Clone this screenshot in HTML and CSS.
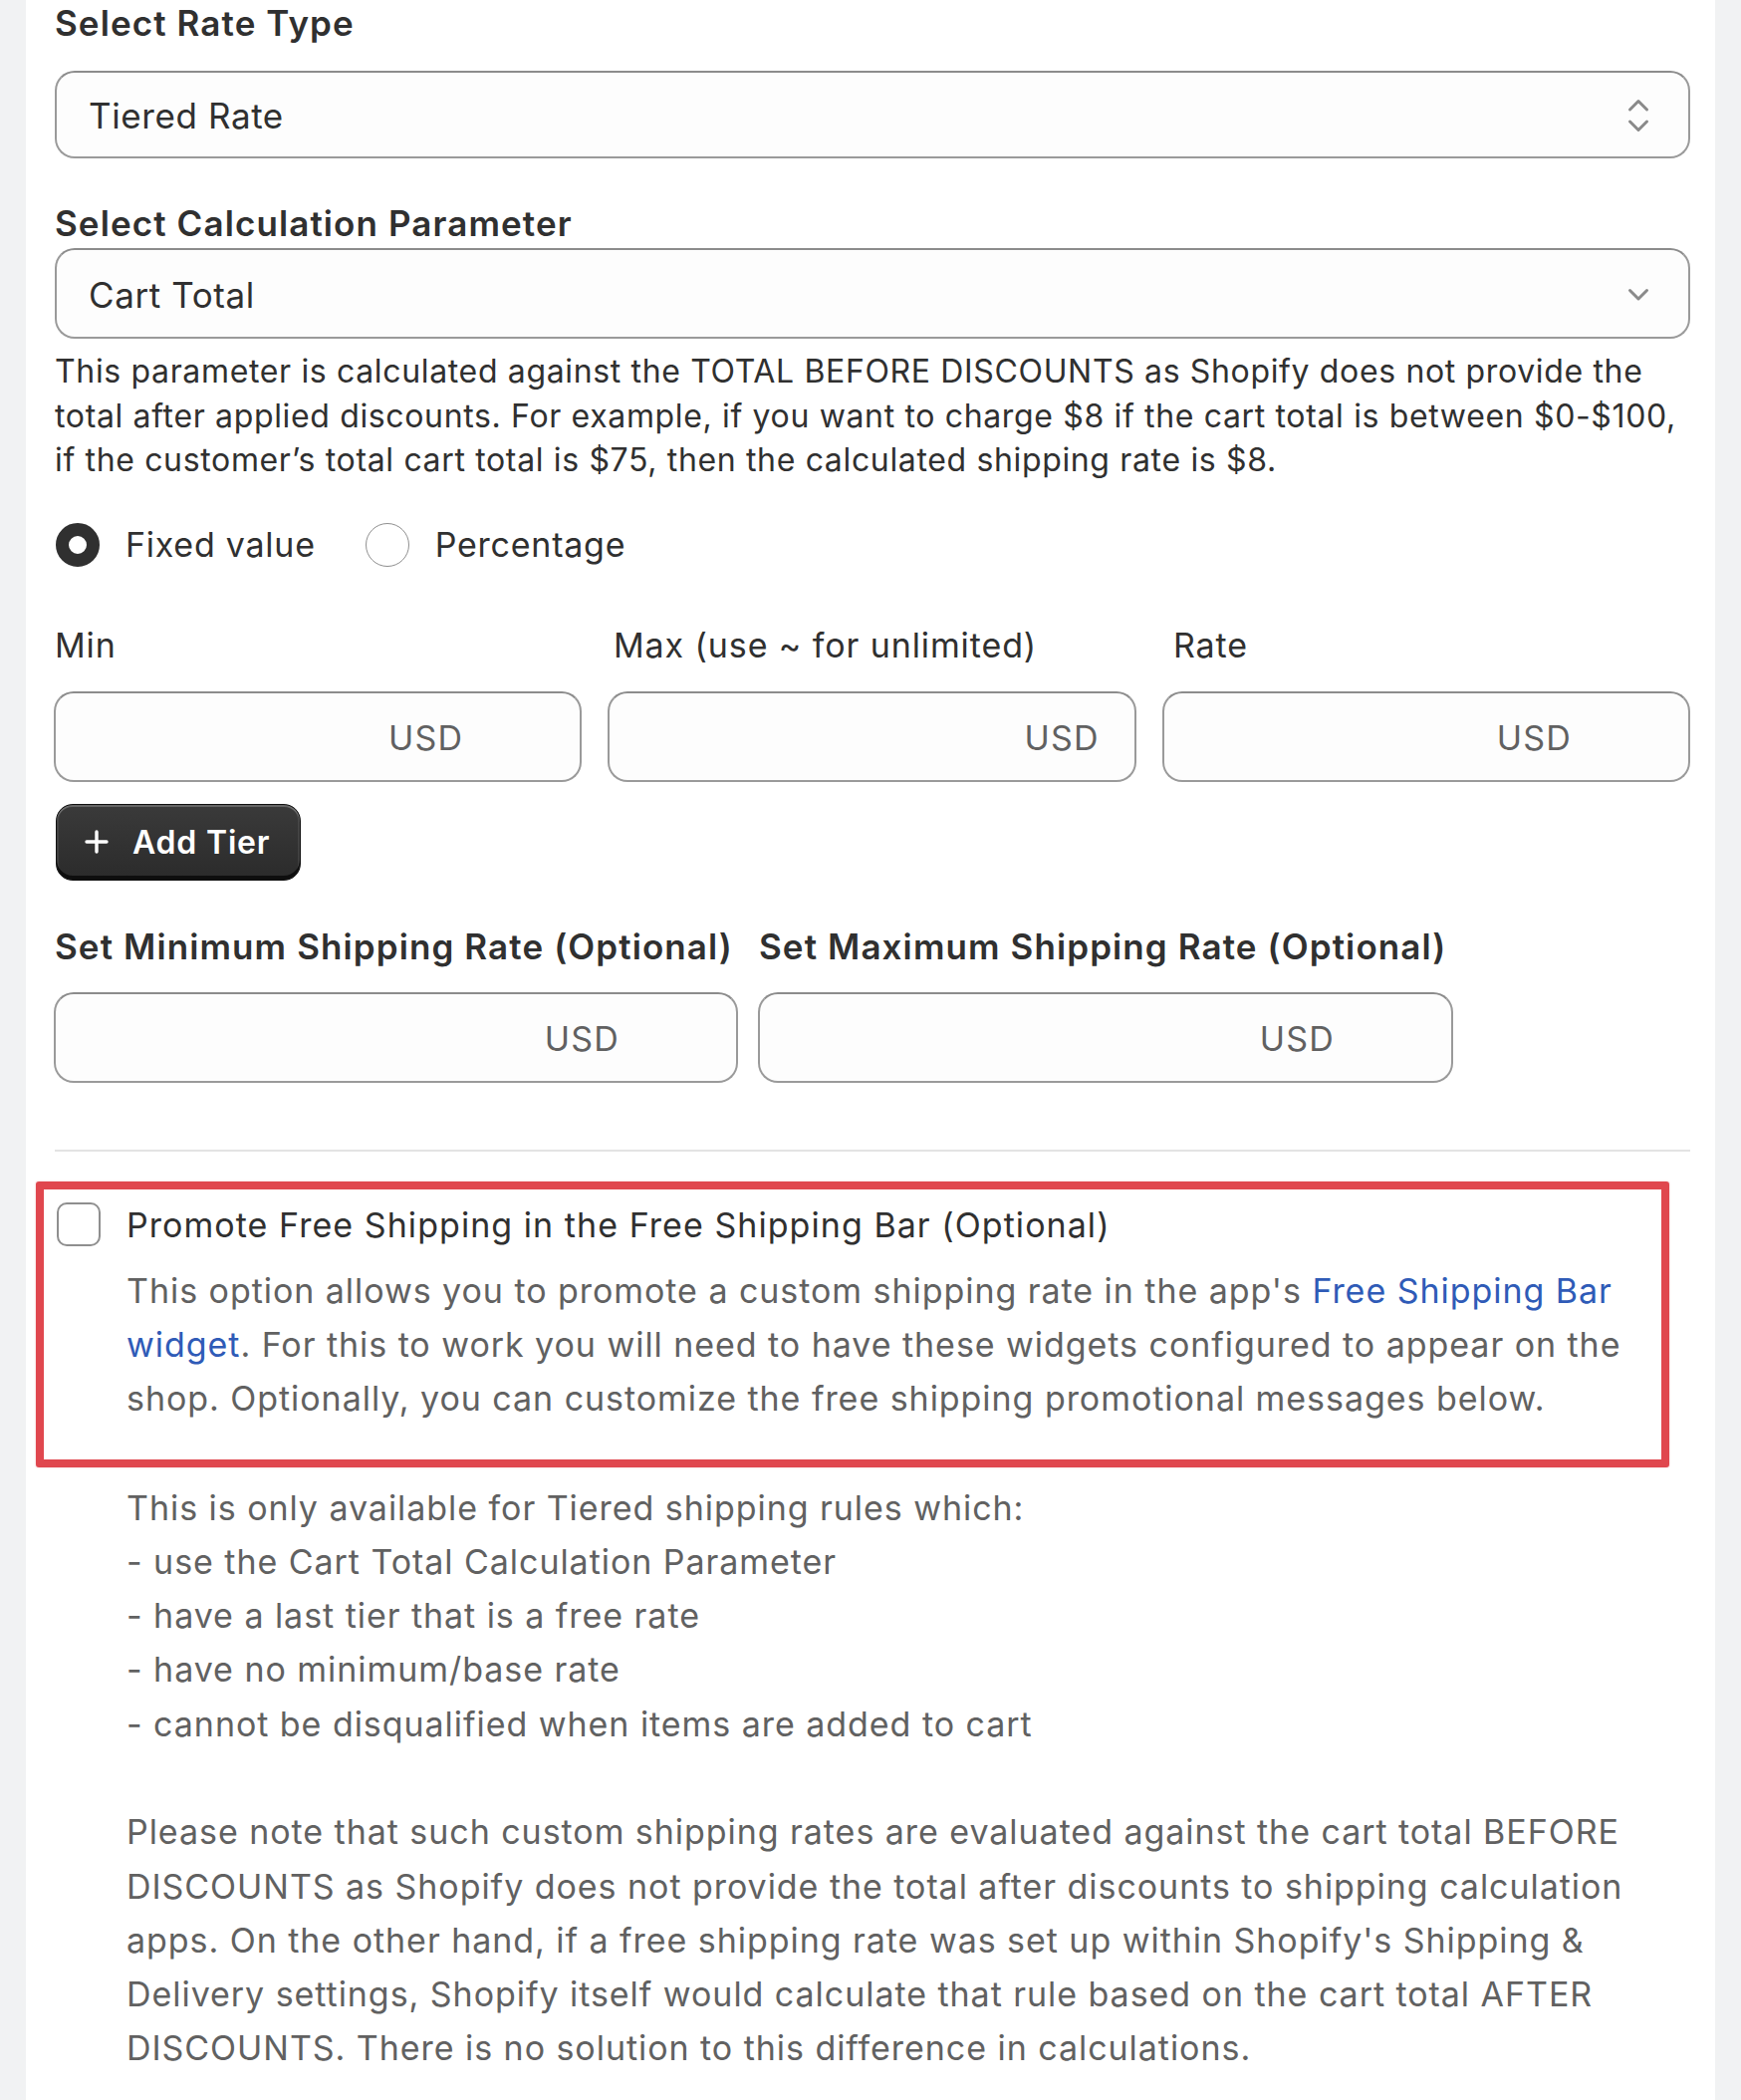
FILE: index.html
```html
<!DOCTYPE html>
<html lang="en">
<head>
<meta charset="utf-8">
<title>Tiered Rate Settings</title>
<link rel="stylesheet" href="styles.css">
</head>
<body>
<main class="card">
  <section class="field">
    <h2 class="field-label field-label--first">Select Rate Type</h2>
    <div class="select select--first">
      <span class="select-value">Tiered Rate</span>
      <svg class="select-icon" width="22" height="36" viewBox="0 0 22 36" aria-hidden="true"><path d="M2.5 12 L11 3.5 L19.5 12 M2.5 24 L11 32.5 L19.5 24" fill="none" stroke="#8a8a8a" stroke-width="3" stroke-linecap="round" stroke-linejoin="round"/></svg>
    </div>
  </section>

  <section class="field">
    <h2 class="field-label field-label--tight">Select Calculation Parameter</h2>
    <div class="select select--second">
      <span class="select-value">Cart Total</span>
      <svg class="select-icon" width="22" height="16" viewBox="0 0 22 16" aria-hidden="true"><path d="M2.5 3.5 L11 12 L19.5 3.5" fill="none" stroke="#8a8a8a" stroke-width="3" stroke-linecap="round" stroke-linejoin="round"/></svg>
    </div>
    <p class="help-text">This parameter is calculated against the TOTAL BEFORE DISCOUNTS as Shopify does not provide the<br>total after applied discounts. For example, if you want to charge $8 if the cart total is between $0-$100,<br>if the customer’s total cart total is $75, then the calculated shipping rate is $8.</p>
  </section>

  <div class="radio-row">
    <label class="radio-option">
      <span class="radio radio--checked"></span>
      <span class="radio-label">Fixed value</span>
    </label>
    <label class="radio-option">
      <span class="radio"></span>
      <span class="radio-label">Percentage</span>
    </label>
  </div>

  <div class="tier-labels">
    <span class="tier-label">Min</span>
    <span class="tier-label">Max (use ~ for unlimited)</span>
    <span class="tier-label">Rate</span>
  </div>
  <div class="tier-inputs">
    <div class="input"><span class="suffix">USD</span></div>
    <div class="input input--narrow-suffix"><span class="suffix">USD</span></div>
    <div class="input"><span class="suffix">USD</span></div>
  </div>

  <button class="btn-primary" type="button">
    <svg class="btn-icon" width="24" height="24" viewBox="0 0 24 24" aria-hidden="true"><path d="M12 2 V22 M2 12 H22" stroke="#ffffff" stroke-width="3.4" stroke-linecap="round"/></svg>
    <span>Add Tier</span>
  </button>

  <div class="limits">
    <div class="limit">
      <h2 class="field-label field-label--nowrap">Set Minimum Shipping Rate (Optional)</h2>
      <div class="input"><span class="suffix">USD</span></div>
    </div>
    <div class="limit">
      <h2 class="field-label field-label--nowrap">Set Maximum Shipping Rate (Optional)</h2>
      <div class="input"><span class="suffix">USD</span></div>
    </div>
  </div>

  <hr class="divider">

  <div class="highlight">
    <div class="checkbox-row">
      <span class="checkbox"></span>
      <div class="checkbox-body">
        <div class="checkbox-label">Promote Free Shipping in the Free Shipping Bar (Optional)</div>
        <p class="checkbox-help">This option allows you to promote a custom shipping rate in the app's <a class="link" href="#">Free Shipping Bar<br>widget</a>. For this to work you will need to have these widgets configured to appear on the<br>shop. Optionally, you can customize the free shipping promotional messages below.</p>
      </div>
    </div>
  </div>

  <div class="notes">
    <p class="note">This is only available for Tiered shipping rules which:<br>- use the Cart Total Calculation Parameter<br>- have a last tier that is a free rate<br>- have no minimum/base rate<br>- cannot be disqualified when items are added to cart</p>
    <p class="note">Please note that such custom shipping rates are evaluated against the cart total BEFORE<br>DISCOUNTS as Shopify does not provide the total after discounts to shipping calculation<br>apps. On the other hand, if a free shipping rate was set up within Shopify's Shipping &amp;<br>Delivery settings, Shopify itself would calculate that rule based on the cart total AFTER<br>DISCOUNTS. There is no solution to this difference in calculations.</p>
  </div>
</main>
</body>
</html>
```

FILE: styles.css
```css
* { box-sizing: border-box; }

html, body {
  margin: 0;
  padding: 0;
}

body {
  background: #f1f2f3;
  font-family: Inter, "Noto Sans", "Liberation Sans", sans-serif;
  color: #303030;
}

.card {
  margin-left: 26px;
  width: 1696px;
  min-height: 2108px;
  background: #ffffff;
  padding: 1px 25px 0 29px;
}

.field-label {
  margin: 0;
  font-size: 35px;
  line-height: 44px;
  font-weight: 600;
  letter-spacing: 1.1px;
  color: #303030;
}

.field-label--first { margin-bottom: 26px; }
.field-label--tight { margin-top: 43px; margin-bottom: 3px; }
.field-label--nowrap { white-space: nowrap; margin-bottom: 24px; }

.select {
  display: flex;
  align-items: center;
  justify-content: space-between;
  border: 2px solid #9a9a9a;
  border-top-color: #8c8c8c;
  border-radius: 20px;
  background: #fdfdfd;
  padding: 2px 39px 0 32px;
}

.select--first { height: 88px; }
.select--second { height: 91px; }

.select-value {
  font-size: 35px;
  letter-spacing: 0.6px;
  color: #303030;
}

.select-icon { display: block; }

.help-text {
  margin: 11px -30px 0 0;
  font-size: 32px;
  line-height: 44.5px;
  letter-spacing: 0.65px;
  color: #303030;
}

.radio-row {
  display: flex;
  align-items: center;
  gap: 50px;
  margin-top: 40px;
  height: 44px;
  padding-left: 1px;
}

.radio-option {
  display: flex;
  align-items: center;
  gap: 26px;
}

.radio {
  width: 44px;
  height: 44px;
  border-radius: 50%;
  border: 1.5px solid #8f8f8f;
  background: #ffffff;
}

.radio--checked {
  border: 13px solid #303030;
}

.radio-label {
  font-size: 34px;
  letter-spacing: 0.75px;
  color: #303030;
}

.tier-labels {
  display: grid;
  grid-template-columns: 561px 562px 1fr;
  margin-top: 57px;
  font-size: 34px;
  line-height: 44px;
  letter-spacing: 0.9px;
}

.tier-label { color: #303030; }

.tier-inputs {
  display: grid;
  grid-template-columns: repeat(3, 1fr);
  gap: 26px;
  margin-top: 24px;
  margin-left: -1px;
}

.input {
  height: 91px;
  display: flex;
  align-items: center;
  justify-content: flex-end;
  padding: 2px 117px 0 0;
  border: 2px solid #9a9a9a;
  border-top-color: #8c8c8c;
  border-radius: 20px;
  background: #fdfdfd;
}

.input--narrow-suffix { padding-right: 35px; }

.suffix {
  font-size: 34px;
  letter-spacing: 1.2px;
  color: #616161;
}

.btn-primary {
  margin-top: 22px;
  display: flex;
  align-items: center;
  gap: 24px;
  height: 77px;
  padding: 0 30px 0 28px;
  margin-left: 1px;
  border: 1px solid #111111;
  border-radius: 17px;
  background: linear-gradient(#3a3a3a, #2b2b2b);
  box-shadow: inset 0 -4px 0 #0e0e0e, inset 0 2px 0 rgba(255,255,255,0.22), inset 2px 0 0 rgba(255,255,255,0.08), inset -2px 0 0 rgba(255,255,255,0.08);
  color: #ffffff;
  font-family: inherit;
  font-size: 32px;
  letter-spacing: 0.8px;
  font-weight: 600;
  cursor: pointer;
}

.btn-icon { display: block; }

.limits {
  display: grid;
  grid-template-columns: 687px 698px;
  column-gap: 20px;
  margin-top: 44px;
  margin-left: -1px;
}

.limit .field-label { padding-left: 1px; }

.divider {
  margin: 67px 0 0;
  border: 0;
  height: 2px;
  background: #e3e3e3;
}

.highlight {
  margin: 30px 0 0 -19px;
  width: 1640px;
  border: 8px solid #e0474e;
  border-radius: 3px;
  padding: 13px 0 34px 13px;
  box-shadow: 0 0 2px rgba(224,71,78,0.4);
}

.checkbox-row {
  display: flex;
  align-items: flex-start;
  gap: 26px;
}

.checkbox {
  flex: none;
  width: 44px;
  height: 44px;
  border: 2px solid #8f8f8f;
  border-radius: 10px;
  background: #ffffff;
}

.checkbox-body { flex: 1; }

.checkbox-label {
  font-size: 34px;
  line-height: 44px;
  letter-spacing: 1.05px;
  color: #303030;
  margin-top: 1px;
}

.checkbox-help {
  margin: 17px 0 0;
  font-size: 34px;
  line-height: 54px;
  letter-spacing: 0.95px;
  color: #616161;
}

.link {
  color: #2f5bb7;
  text-decoration: none;
}

.notes {
  margin-top: 14px;
  padding-left: 72px;
}

.note {
  margin: 0;
  font-size: 34px;
  line-height: 54.3px;
  letter-spacing: 0.95px;
  color: #616161;
}

.note + .note { margin-top: 54.3px; }
```
